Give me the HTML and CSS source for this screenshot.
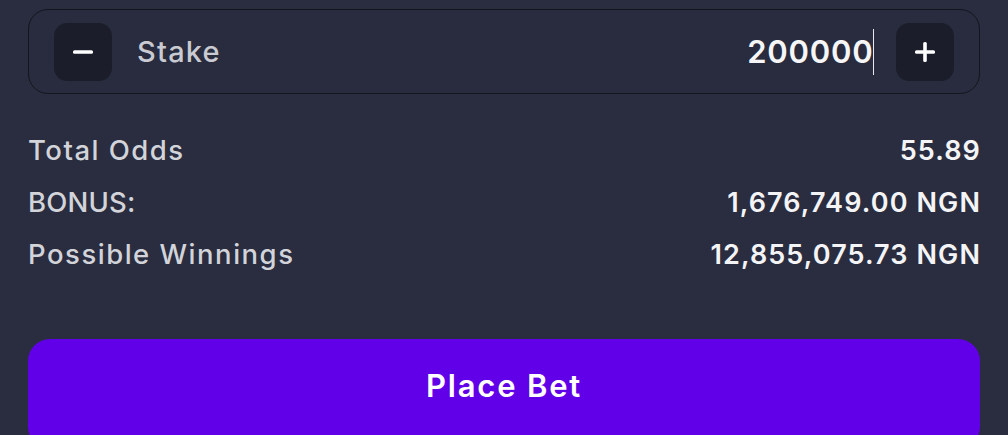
FILE: index.html
```html
<!DOCTYPE html>
<html lang="en">
<head>
<meta charset="utf-8">
<link rel="stylesheet" href="styles.css">
</head>
<body>
<div class="slip">
  <div class="stake-box">
    <button class="step-btn" aria-label="decrease">
      <svg width="20" height="20" viewBox="0 0 20 20"><rect x="0" y="8.3" width="20" height="3.4" rx="1.5" fill="#ffffff"/></svg>
    </button>
    <span class="stake-label">Stake</span>
    <span class="stake-value">200000<span class="caret"></span></span>
    <button class="step-btn" aria-label="increase">
      <svg width="20" height="20" viewBox="0 0 20 20"><rect x="0" y="8.2" width="20" height="3.6" rx="1.5" fill="#ffffff"/><rect x="8.2" y="0" width="3.6" height="20" rx="1.5" fill="#ffffff"/></svg>
    </button>
  </div>
  <div class="summary">
    <div class="row"><span class="label">Total Odds</span><span class="value">55.89</span></div>
    <div class="row"><span class="label caps">BONUS:</span><span class="value">1,676,749.00 NGN</span></div>
    <div class="row"><span class="label">Possible Winnings</span><span class="value">12,855,075.73 NGN</span></div>
  </div>
  <button class="place-bet">Place Bet</button>
</div>
</body>
</html>
```
FILE: styles.css
```css
html, body {
  margin: 0;
  padding: 0;
  background: #292d3f;
  height: 100%;
  overflow: hidden;
}
body {
  font-family: Inter, "Noto Sans", sans-serif;
  color: #d3d4da;
}
.slip {
  padding: 9px 28px 0 28px;
  display: flex;
  flex-direction: column;
}
.stake-box {
  height: 85px;
  box-sizing: border-box;
  border: 1.5px solid #14161d;
  border-radius: 20px;
  background: #282c3e;
  display: flex;
  align-items: center;
  padding: 0 25px;
}
.step-btn {
  width: 58px;
  height: 58px;
  border: none;
  border-radius: 13px;
  background: #1b1e2a;
  display: flex;
  align-items: center;
  justify-content: center;
  padding: 0;
  flex: none;
}
.stake-label {
  margin-left: 25px;
  font-size: 29px;
  font-weight: 500;
  letter-spacing: 1.2px;
  color: #c9cad2;
  flex: 1;
}
.stake-value {
  font-size: 31px;
  font-weight: 600;
  letter-spacing: 0.8px;
  color: #f6f6f8;
  display: flex;
  align-items: center;
  margin-right: 22px;
}
.caret {
  width: 1.5px;
  height: 46px;
  background: #e8e8ee;
  margin-left: -1px;
}
.summary {
  margin-top: 30px;
  display: flex;
  flex-direction: column;
}
.row {
  height: 52px;
  display: flex;
  align-items: center;
  justify-content: space-between;
}
.label {
  font-size: 27.5px;
  font-weight: 500;
  letter-spacing: 1.5px;
  color: #d3d4da;
}
.label.caps {
  letter-spacing: 0.2px;
}
.value {
  font-size: 27px;
  font-weight: 600;
  letter-spacing: 1.1px;
  margin-right: -1px;
  color: #f4f4f7;
}
.place-bet {
  margin-top: 59px;
  height: 110px;
  border: none;
  border-radius: 22px;
  background: #6100e8;
  color: #ffffff;
  font-family: Inter, "Noto Sans", sans-serif;
  font-size: 31px;
  font-weight: 600;
  letter-spacing: 1.8px;
  display: flex;
  align-items: flex-start;
  justify-content: center;
  padding: 28px 0 0 0;
}
```
